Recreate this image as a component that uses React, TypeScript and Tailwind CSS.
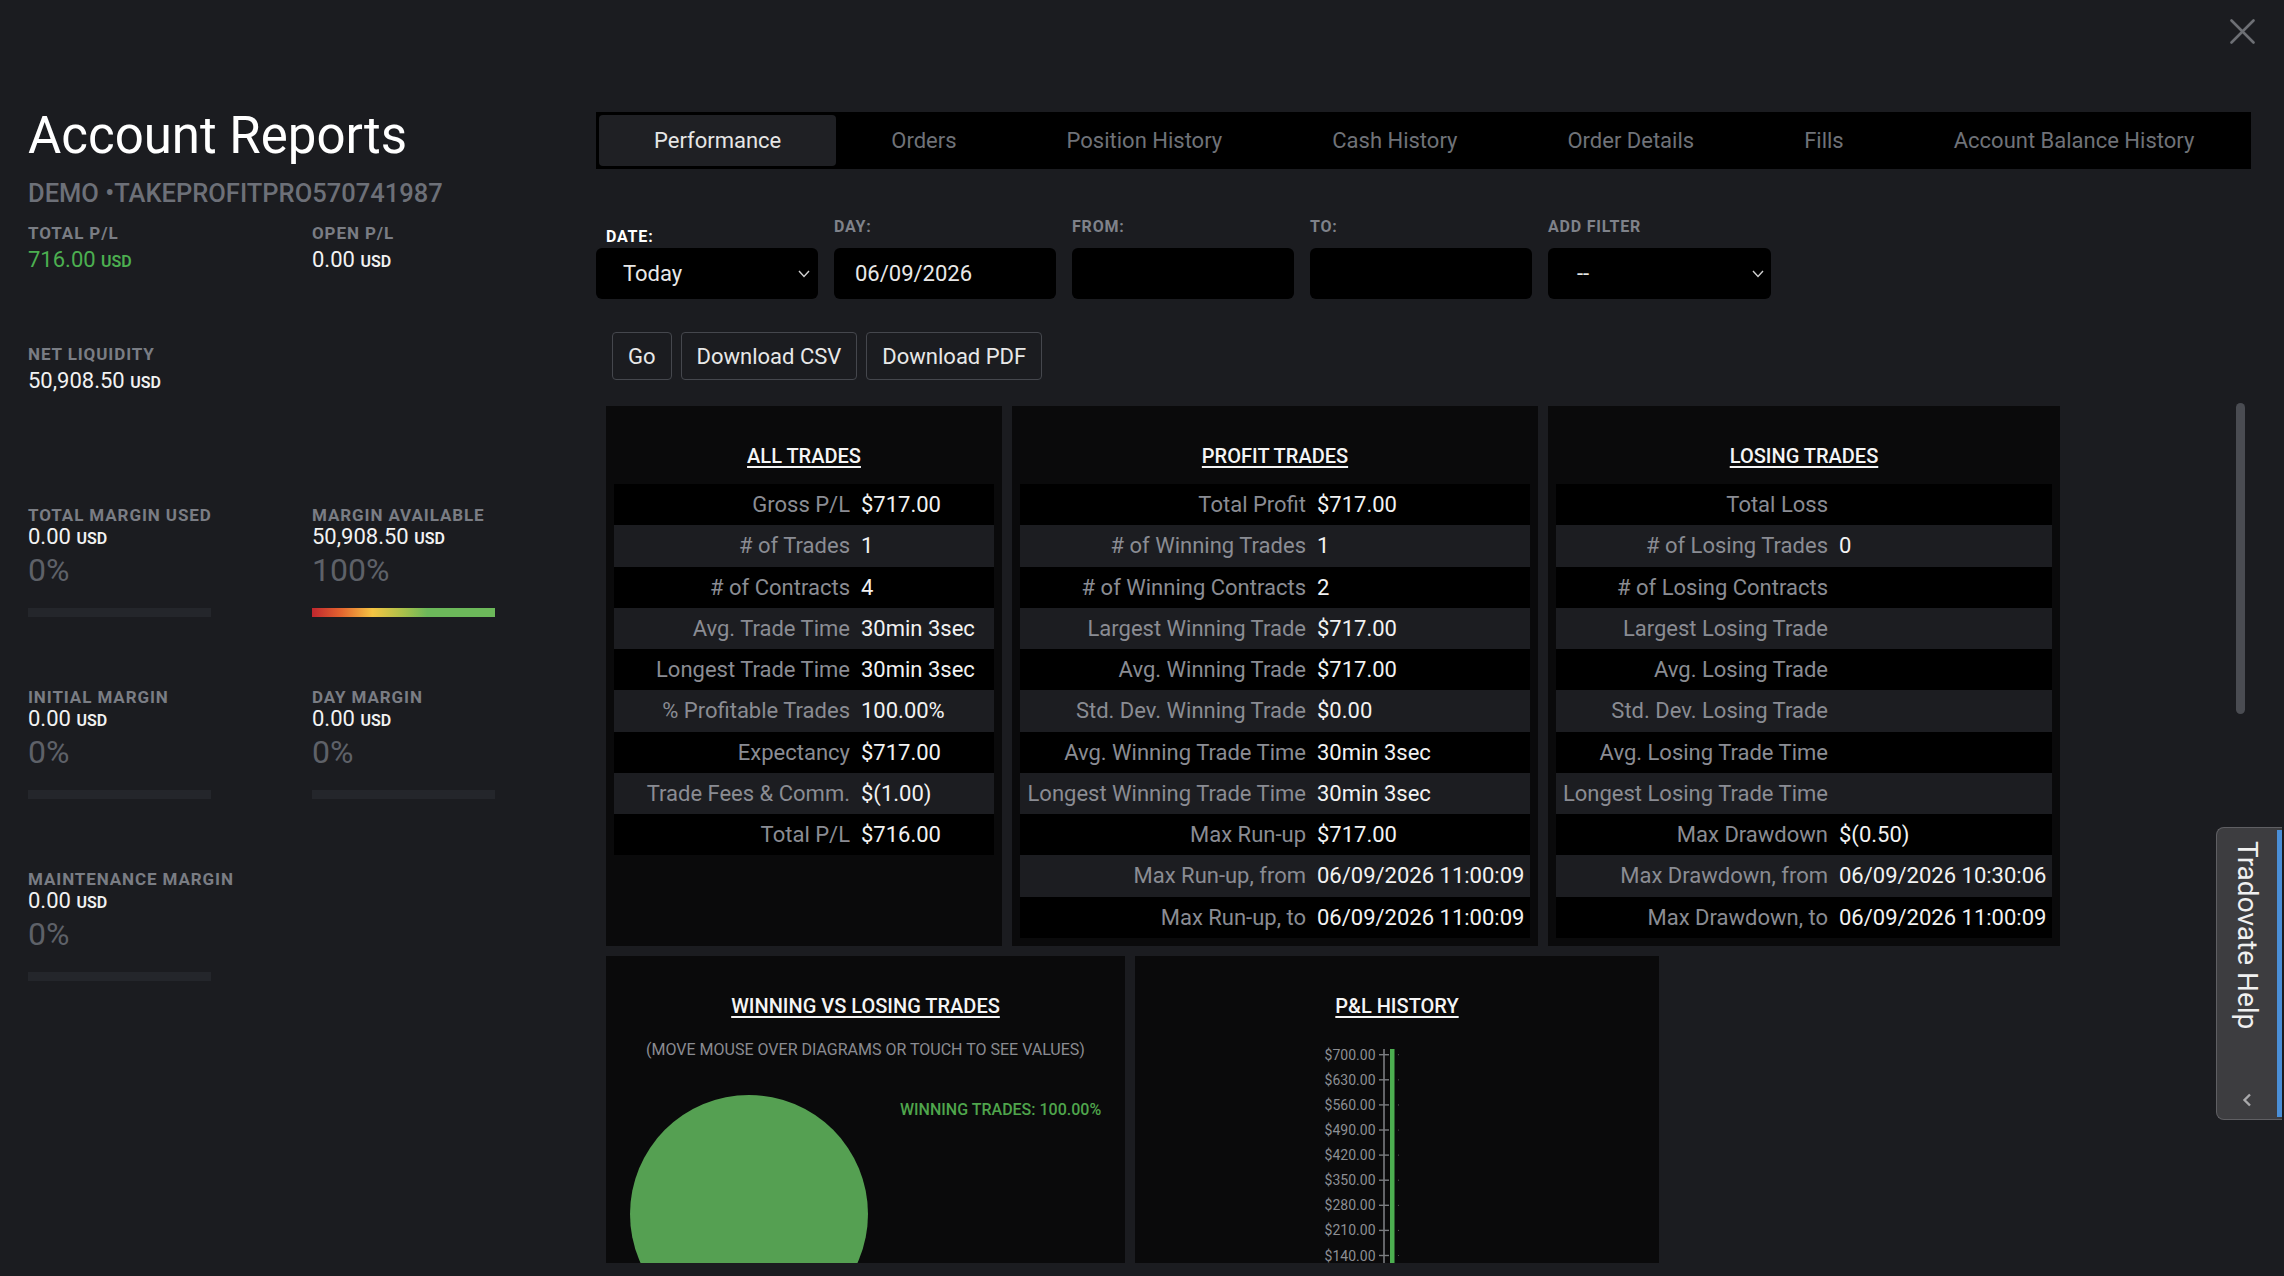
import React from "react";

type Row = [string, string];

const allTrades: Row[] = [
  ["Gross P/L", "$717.00"],
  ["# of Trades", "1"],
  ["# of Contracts", "4"],
  ["Avg. Trade Time", "30min 3sec"],
  ["Longest Trade Time", "30min 3sec"],
  ["% Profitable Trades", "100.00%"],
  ["Expectancy", "$717.00"],
  ["Trade Fees & Comm.", "$(1.00)"],
  ["Total P/L", "$716.00"],
];

const profitTrades: Row[] = [
  ["Total Profit", "$717.00"],
  ["# of Winning Trades", "1"],
  ["# of Winning Contracts", "2"],
  ["Largest Winning Trade", "$717.00"],
  ["Avg. Winning Trade", "$717.00"],
  ["Std. Dev. Winning Trade", "$0.00"],
  ["Avg. Winning Trade Time", "30min 3sec"],
  ["Longest Winning Trade Time", "30min 3sec"],
  ["Max Run-up", "$717.00"],
  ["Max Run-up, from", "06/09/2026 11:00:09"],
  ["Max Run-up, to", "06/09/2026 11:00:09"],
];

const losingTrades: Row[] = [
  ["Total Loss", ""],
  ["# of Losing Trades", "0"],
  ["# of Losing Contracts", ""],
  ["Largest Losing Trade", ""],
  ["Avg. Losing Trade", ""],
  ["Std. Dev. Losing Trade", ""],
  ["Avg. Losing Trade Time", ""],
  ["Longest Losing Trade Time", ""],
  ["Max Drawdown", "$(0.50)"],
  ["Max Drawdown, from", "06/09/2026 10:30:06"],
  ["Max Drawdown, to", "06/09/2026 11:00:09"],
];

const tabs = [
  "Performance",
  "Orders",
  "Position History",
  "Cash History",
  "Order Details",
  "Fills",
  "Account Balance History",
];

function Chevron() {
  return (
    <svg width="12" height="8" viewBox="0 0 12 8" fill="none">
      <polyline points="1,1 6,6.5 11,1" stroke="#d0d0d0" strokeWidth="1.4" />
    </svg>
  );
}

function Label({ children }: { children: React.ReactNode }) {
  return (
    <div className="text-[17px] leading-[20px] font-bold tracking-[0.9px] text-[#7a7d84] whitespace-nowrap">
      {children}
    </div>
  );
}

function Money({ v, green }: { v: string; green?: boolean }) {
  return (
    <div className={`h-[26px] text-[22px] leading-[26px] whitespace-nowrap ${green ? "text-[#4caf50]" : "text-[#f2f2f2]"}`}>
      {v} <span className="text-[16px] leading-none font-semibold">USD</span>
    </div>
  );
}

function MarginGroup({
  label,
  value,
  pct,
  full,
}: {
  label: string;
  value: string;
  pct: string;
  full?: boolean;
}) {
  return (
    <div className="flex flex-col">
      <Label>{label}</Label>
      <div className="mt-[-1px]">
        <Money v={value} />
      </div>
      <div className="mt-[2px] h-[36px] text-[32px] leading-[36px] font-normal text-[#5e6168]">{pct}</div>
      <div
        className={`mt-[20px] h-[9px] w-[183px] ${
          full
            ? "bg-[linear-gradient(to_right,#c0262e_0%,#e4652f_16%,#f5c443_33%,#a9c14b_50%,#6cb85a_63%,#6cb85a_100%)]"
            : "bg-[#24262b]"
        }`}
      />
    </div>
  );
}

function StatPanel({
  title,
  rows,
  labelW,
  width,
}: {
  title: string;
  rows: Row[];
  labelW: string;
  width: string;
}) {
  return (
    <div className={`${width} bg-[#0a0a0b] pt-[36px] px-[8px] pb-[8px] flex flex-col`}>
      <div className="text-center text-[20px] leading-[28px] font-medium text-[#f5f5f5] mb-[14px]">
        <span className="underline underline-offset-[3px] decoration-[1.5px]">{title}</span>
      </div>
      <div className="flex flex-col">
        {rows.map(([l, v], i) => (
          <div
            key={l}
            className={`h-[41.25px] flex items-center text-[22px] ${i % 2 === 0 ? "bg-black" : "bg-[#1c1d21]"}`}
          >
            <div className={`${labelW} shrink-0 text-right text-[#8a8c93] whitespace-nowrap`}>{l}</div>
            <div className="pl-[11px] text-[#f2f2f2] whitespace-nowrap">{v}</div>
          </div>
        ))}
      </div>
    </div>
  );
}

export default function App() {
  const axis = ["$700.00", "$630.00", "$560.00", "$490.00", "$420.00", "$350.00", "$280.00", "$210.00", "$140.00"];
  return (
    <div className="relative w-[2284px] h-[1276px] overflow-hidden bg-[#1b1c20] flex font-[Roboto,sans-serif] text-white">
      {/* Sidebar */}
      <aside className="w-[596px] shrink-0 pl-[28px] pt-[106px]">
        <h1 className="text-[51px] leading-[60px] font-normal text-white whitespace-nowrap">Account Reports</h1>
        <div className="mt-[12px] text-[25.5px] leading-[30px] font-medium text-[#6d7078] whitespace-nowrap">
          DEMO •TAKEPROFITPRO570741987
        </div>
        <div className="mt-[15px] grid grid-cols-[284px_284px]">
          <div>
            <Label>TOTAL P/L</Label>
            <div className="mt-[4px]">
              <Money v="716.00" green />
            </div>
          </div>
          <div>
            <Label>OPEN P/L</Label>
            <div className="mt-[4px]">
              <Money v="0.00" />
            </div>
          </div>
        </div>
        <div className="mt-[71px]">
          <Label>NET LIQUIDITY</Label>
          <div className="mt-[4px]">
            <Money v="50,908.50" />
          </div>
        </div>
        <div className="mt-[111px] grid grid-cols-[284px_284px] gap-y-[70px]">
          <MarginGroup label="TOTAL MARGIN USED" value="0.00" pct="0%" />
          <MarginGroup label="MARGIN AVAILABLE" value="50,908.50" pct="100%" full />
          <MarginGroup label="INITIAL MARGIN" value="0.00" pct="0%" />
          <MarginGroup label="DAY MARGIN" value="0.00" pct="0%" />
          <MarginGroup label="MAINTENANCE MARGIN" value="0.00" pct="0%" />
        </div>
      </aside>

      {/* Main */}
      <main className="flex-1 min-w-0 pt-[112px] pr-[33px] pb-[13px] flex flex-col">
        <div className="h-[57px] shrink-0 bg-black p-[3px] flex items-stretch">
          {tabs.map((t, i) => (
            <div
              key={t}
              className={`px-[55px] flex items-center text-[22px] whitespace-nowrap rounded-[4px] ${
                i === 0 ? "bg-[#1f2024] text-[#e6e6e6]" : "text-[#6f7278]"
              }`}
            >
              {t}
            </div>
          ))}
        </div>

        {/* filters */}
        <div className="mt-[48px] flex items-end gap-[16px] shrink-0">
          <div className="w-[222px]">
            <div className="mb-[1px] pl-[10px] text-[16px] leading-[20px] font-bold tracking-[0.8px] text-white">DATE:</div>
            <div className="h-[51px] rounded-[6px] bg-black flex items-center justify-between pl-[27px] pr-[8px] text-[22px] text-[#e8e8e8]">
              <span>Today</span>
              <Chevron />
            </div>
          </div>
          <div className="w-[222px]">
            <div className="mb-[11px] text-[16px] leading-[20px] font-bold tracking-[0.8px] text-[#7f828a]">DAY:</div>
            <div className="h-[51px] rounded-[6px] bg-black flex items-center pl-[21px] text-[22px] text-[#e8e8e8]">
              06/09/2026
            </div>
          </div>
          <div className="w-[222px]">
            <div className="mb-[11px] text-[16px] leading-[20px] font-bold tracking-[0.8px] text-[#7f828a]">FROM:</div>
            <div className="h-[51px] rounded-[6px] bg-black" />
          </div>
          <div className="w-[222px]">
            <div className="mb-[11px] text-[16px] leading-[20px] font-bold tracking-[0.8px] text-[#7f828a]">TO:</div>
            <div className="h-[51px] rounded-[6px] bg-black" />
          </div>
          <div className="w-[223px]">
            <div className="mb-[11px] text-[16px] leading-[20px] font-bold tracking-[0.8px] text-[#7f828a]">ADD FILTER</div>
            <div className="h-[51px] rounded-[6px] bg-black flex items-center justify-between pl-[29px] pr-[7px] text-[22px] text-[#e8e8e8]">
              <span>--</span>
              <Chevron />
            </div>
          </div>
        </div>

        {/* buttons */}
        <div className="mt-[33px] ml-[16px] flex gap-[9px] shrink-0">
          {["Go", "Download CSV", "Download PDF"].map((b) => (
            <div
              key={b}
              className="h-[48px] px-[15px] flex items-center border border-[#45474d] rounded-[4px] bg-[#1b1c20] text-[22px] text-[#e8e8e8] whitespace-nowrap"
            >
              {b}
            </div>
          ))}
        </div>

        {/* scroll area */}
        <div className="mt-[23px] flex-1 min-h-0 overflow-hidden flex">
          <div className="flex-1 min-w-0 pl-[10px] pt-[3px] flex flex-col gap-[10px]">
            <div className="flex gap-[10px] items-stretch">
              <StatPanel title="ALL TRADES" rows={allTrades} labelW="w-[236px]" width="w-[396px]" />
              <StatPanel title="PROFIT TRADES" rows={profitTrades} labelW="w-[286px]" width="w-[526px]" />
              <StatPanel title="LOSING TRADES" rows={losingTrades} labelW="w-[272px]" width="w-[512px]" />
            </div>
            <div className="flex gap-[10px]">
              <div className="w-[519px] h-[420px] shrink-0 bg-[#0a0a0b] pt-[36px] flex flex-col">
                <div className="text-center text-[20px] leading-[28px] font-medium text-[#f5f5f5]">
                  <span className="underline underline-offset-[3px] decoration-[1.5px]">WINNING VS LOSING TRADES</span>
                </div>
                <div className="mt-[20px] text-center text-[16px] leading-[20px] text-[#8a8c92]">
                  (MOVE MOUSE OVER DIAGRAMS OR TOUCH TO SEE VALUES)
                </div>
                <svg width="519" height="300" viewBox="0 0 519 300" className="block">
                  <circle cx="143" cy="154" r="119" fill="#55a052" />
                  <text x="294" y="54.5" fontSize="16" fontWeight="500" fill="#4fa54c" fontFamily="Roboto, sans-serif">
                    WINNING TRADES: 100.00%
                  </text>
                </svg>
              </div>
              <div className="w-[524px] h-[420px] shrink-0 bg-[#0a0a0b] pt-[36px] flex flex-col">
                <div className="text-center text-[20px] leading-[28px] font-medium text-[#f5f5f5]">
                  <span className="underline underline-offset-[3px] decoration-[1.5px]">P&amp;L HISTORY</span>
                </div>
                <svg width="524" height="320" viewBox="0 0 524 320" className="block">
                  <line x1="249" y1="29" x2="249" y2="320" stroke="#7a7c80" strokeWidth="1.6" />
                  <rect x="255" y="29" width="4.5" height="291" fill="#4caf50" />
                  {axis.map((a, i) => {
                    const cy = 34.7 + i * 25.1;
                    return (
                      <g key={a}>
                        <line x1="244" y1={cy} x2="254" y2={cy} stroke="#7a7c80" strokeWidth="1.4" />
                        <circle cx="263.5" cy={cy} r="0.6" fill="#555" />
                        <text
                          x="240.5"
                          y={cy + 5}
                          textAnchor="end"
                          fontSize="14"
                          fill="#8d8f94"
                          fontFamily="Roboto, sans-serif"
                        >
                          {a}
                        </text>
                      </g>
                    );
                  })}
                </svg>
              </div>
            </div>
          </div>
          <div className="w-[9px] h-[311px] mr-[6px] shrink-0 rounded-full bg-[#4a4c52]" />
        </div>
      </main>

      {/* close */}
      <svg className="absolute left-[2230px] top-[19px]" width="25" height="25" viewBox="0 0 25 25" fill="none">
        <path d="M1.5 1.5 L23.5 23.5 M23.5 1.5 L1.5 23.5" stroke="#6d6f74" strokeWidth="2.6" strokeLinecap="round" />
      </svg>

      {/* help tab */}
      <div className="absolute left-[2216px] top-[827px] w-[66px] h-[293px] flex bg-[#3d3d40] border border-[#5f5f63] border-r-0 rounded-l-[8px] overflow-hidden">
        <div className="flex-1 flex flex-col items-center pt-[13px] pb-[12px]">
          <div className="[writing-mode:vertical-rl] text-[28px] leading-[30px] text-[#f0f0f0] whitespace-nowrap">
            Tradovate Help
          </div>
          <div className="mt-auto">
            <svg width="10" height="14" viewBox="0 0 10 14" fill="none">
              <polyline points="8,1.5 2.5,7 8,12.5" stroke="#a9a9ab" strokeWidth="2.4" />
            </svg>
          </div>
        </div>
        <div className="w-[5px] my-[2px] bg-[#4a8fd8]" />
      </div>
    </div>
  );
}
